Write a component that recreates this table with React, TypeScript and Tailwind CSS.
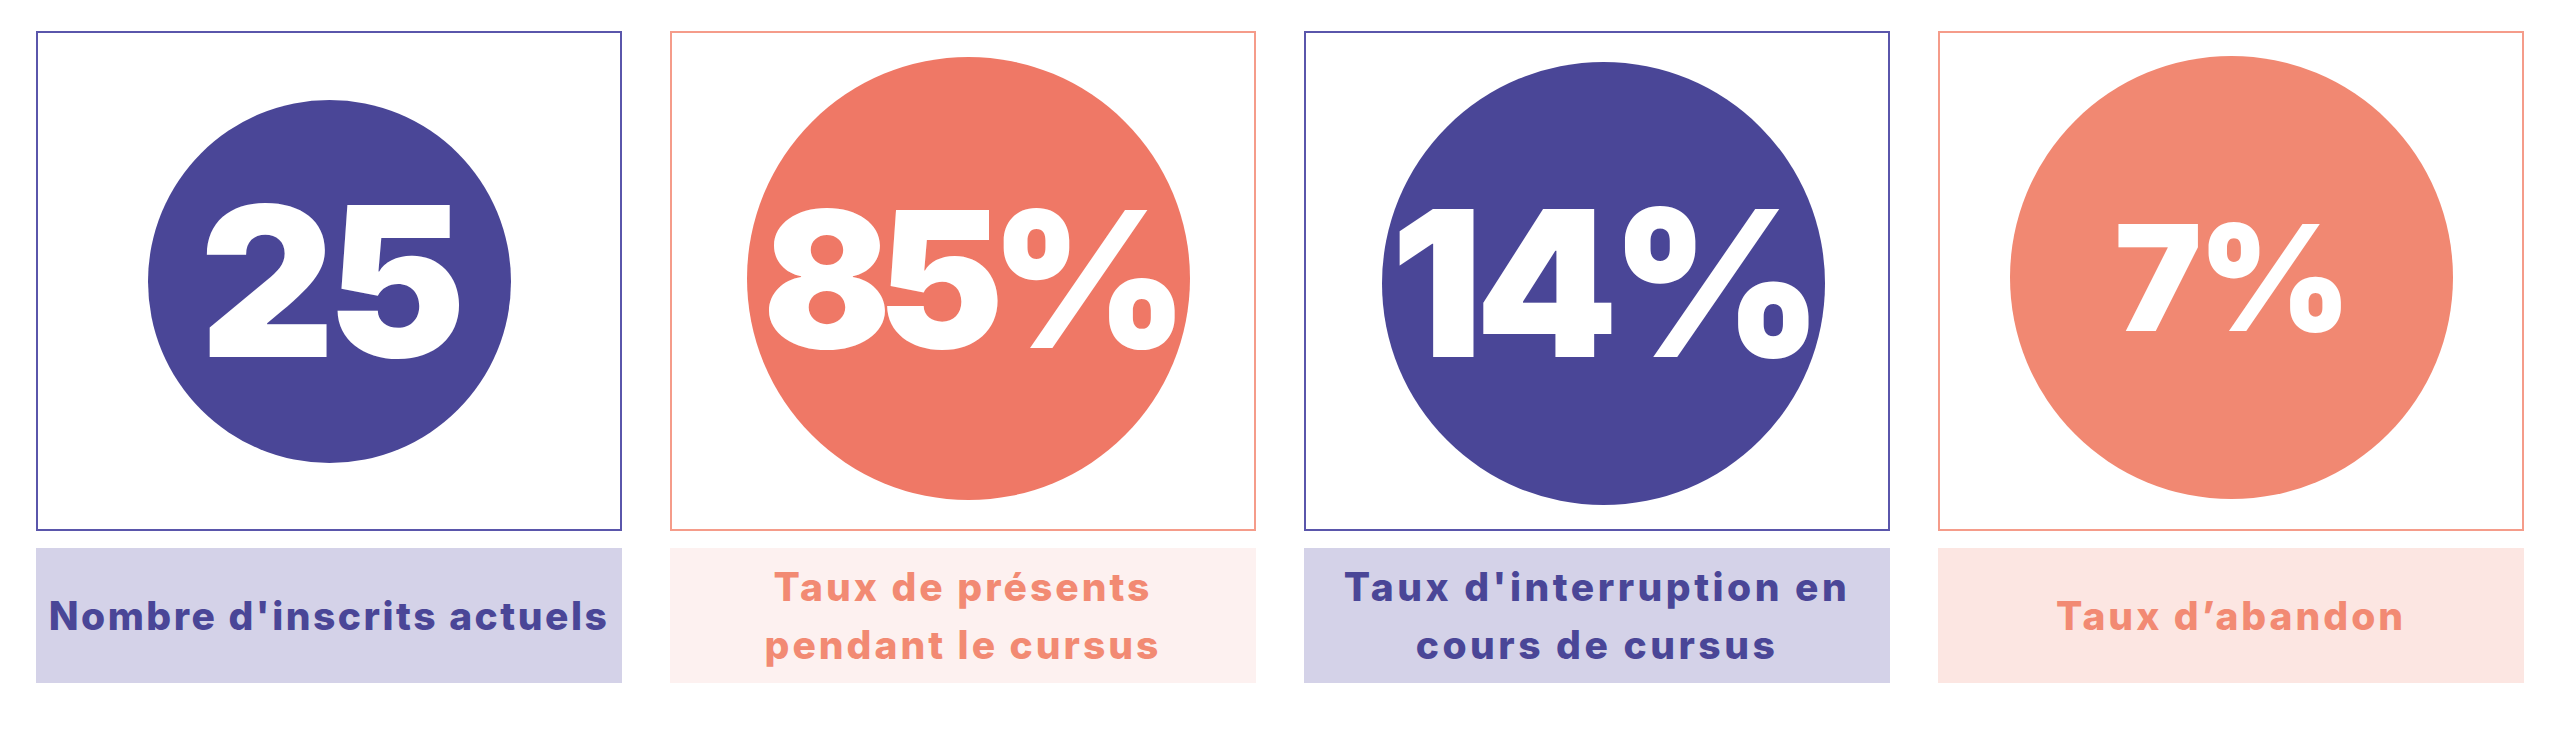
const stats = [
  {
    value: "25",
    label: ["Nombre d'inscrits actuels"],
    border: "border-[#5a56ab]",
    circle: "bg-[#4a4697] w-[363px] h-[363px]",
    shift: "",
    num: "text-[209px] tracking-[-8px]",
    labelBg: "bg-[#d4d2e8]",
    labelText: "text-[#4a4697] tracking-[2.5px]",
  },
  {
    value: "85%",
    label: ["Taux de présents", "pendant le cursus"],
    border: "border-[#f59c8a]",
    circle: "bg-[#ef7866] w-[443px] h-[443px]",
    shift: "ml-[11px] -mt-[5px]",
    num: "text-[190px] tracking-[-14px]",
    labelBg: "bg-[#fdf1f0]",
    labelText: "text-[#f28a73] tracking-[3px]",
  },
  {
    value: "14%",
    label: ["Taux d'interruption en", "cours de cursus"],
    border: "border-[#5a56ab]",
    circle: "bg-[#4a4697] w-[443px] h-[443px]",
    shift: "ml-[12px] mt-[4px]",
    num: "text-[204px] tracking-[-8px]",
    labelBg: "bg-[#d4d2e8]",
    labelText: "text-[#4a4697] tracking-[3.5px]",
  },
  {
    value: "7%",
    label: ["Taux d’abandon"],
    border: "border-[#f59c8a]",
    circle: "bg-[#f18872] w-[443px] h-[443px]",
    shift: "-mt-[7px]",
    num: "text-[147px] tracking-[-4px]",
    labelBg: "bg-[#fce6e2]",
    labelText: "text-[#f28a73] tracking-[3px]",
  },
]

export default function App() {
  return (
    <div className="w-[2560px] h-[731px] bg-white font-['Inter','Liberation_Sans',sans-serif]">
      <div className="flex gap-[48px] px-[36px] pt-[31px]">
        {stats.map((s) => (
          <div key={s.value} className="flex flex-col w-[586px]">
            {/* Chiffre dans le cercle */}
            <div className={`h-[500px] border-2 ${s.border} flex items-center justify-center`}>
              <div className={`${s.circle} ${s.shift} rounded-full flex items-center justify-center shrink-0`}>
                <span className={`${s.num} font-black text-white leading-none`}>{s.value}</span>
              </div>
            </div>

            {/* Libellé */}
            <div className={`mt-[17px] h-[135px] ${s.labelBg} flex flex-col items-center justify-center`}>
              {s.label.map((line) => (
                <p key={line} className={`${s.labelText} text-[39px] font-extrabold leading-[58px] whitespace-nowrap`}>
                  {line}
                </p>
              ))}
            </div>
          </div>
        ))}
      </div>
    </div>
  )
}
